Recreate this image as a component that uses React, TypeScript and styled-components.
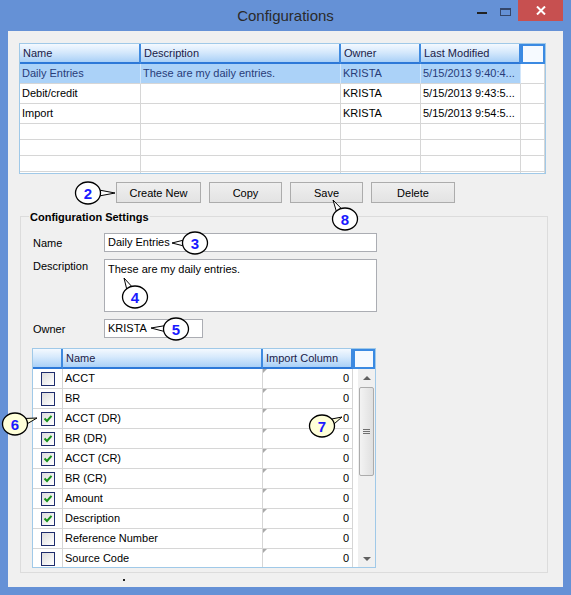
import React from 'react';
import styled, { createGlobalStyle } from 'styled-components';

const GlobalStyle = createGlobalStyle`
  html, body {
    margin: 0;
    padding: 0;
    background: #ffffff;
  }
  body {
    font-family: "Liberation Sans", Arial, sans-serif;
    font-size: 11px;
    color: #000;
  }
`;

const configs = [
  { name: 'Daily Entries', description: 'These are my daily entries.', owner: 'KRISTA', modified: '5/15/2013 9:40:4...' },
  { name: 'Debit/credit', description: '', owner: 'KRISTA', modified: '5/15/2013 9:43:5...' },
  { name: 'Import', description: '', owner: 'KRISTA', modified: '5/15/2013 9:54:5...' },
];

const fields = [
  { name: 'ACCT', checked: false },
  { name: 'BR', checked: false },
  { name: 'ACCT (DR)', checked: true },
  { name: 'BR (DR)', checked: true },
  { name: 'ACCT (CR)', checked: true },
  { name: 'BR (CR)', checked: true },
  { name: 'Amount', checked: true },
  { name: 'Description', checked: true },
  { name: 'Reference Number', checked: false },
  { name: 'Source Code', checked: false },
];

// callout bubbles laid over the screenshot
const callouts = [
  { n: '2', cx: 88, cy: 193, tip: [115, 193], fill: '#ffffff' },
  { n: '3', cx: 195, cy: 243, tip: [172, 243], fill: '#ffffff' },
  { n: '4', cx: 135, cy: 297, tip: [124, 278], fill: '#ffffff' },
  { n: '5', cx: 176, cy: 329, tip: [151, 328], fill: '#ffffff' },
  { n: '8', cx: 345, cy: 219, tip: [333, 200], fill: '#ffffff' },
  { n: '6', cx: 15, cy: 424, tip: [37, 418], fill: '#ffffd9' },
  { n: '7', cx: 322, cy: 426, tip: [342, 417], fill: '#ffffd9' },
];

const topCols = '121px 200px 80px 100px 24px';
const fieldCols = '30px 200px 90px';

const App = () => {
  return (
    <>
      <GlobalStyle />
      <Window>
        <TitleBar>
          <span />
          <Title>Configurations</Title>
          <Controls>
            <MinButton>
              <MinGlyph />
            </MinButton>
            <MaxButton>
              <MaxGlyph />
            </MaxButton>
            <CloseButton>
              <svg width="10" height="9" viewBox="0 0 10 9">
                <path d="M1 0.5 L9 8.5 M9 0.5 L1 8.5" stroke="#fff" strokeWidth="2" />
              </svg>
            </CloseButton>
          </Controls>
        </TitleBar>

        <Client>
          <TopGrid>
            <GridRow cols={topCols} height={20}>
              <HeaderCell>Name</HeaderCell>
              <HeaderCell>Description</HeaderCell>
              <HeaderCell>Owner</HeaderCell>
              <HeaderCell>Last Modified</HeaderCell>
              <HeaderCorner />
            </GridRow>
            {configs.map((c) => (
              <GridRow key={c.name} cols={topCols} height={20}>
                <Cell selected={c.name === 'Daily Entries'}>{c.name}</Cell>
                <Cell selected={c.name === 'Daily Entries'}>{c.description}</Cell>
                <Cell selected={c.name === 'Daily Entries'}>{c.owner}</Cell>
                <Cell selected={c.name === 'Daily Entries'}>{c.modified}</Cell>
                <Cell />
              </GridRow>
            ))}
            {[0, 1, 2, 3].map((i) => (
              <GridRow key={i} cols={topCols} height={16}>
                <Cell />
                <Cell />
                <Cell />
                <Cell />
                <Cell />
              </GridRow>
            ))}
          </TopGrid>

          <ButtonRow>
            <Button width={85}>Create New</Button>
            <Button width={73}>Copy</Button>
            <Button width={73}>Save</Button>
            <Button width={84}>Delete</Button>
          </ButtonRow>

          <GroupBox>
            <GroupTitle>Configuration Settings</GroupTitle>

            <FieldRow gap={9}>
              <Label>Name</Label>
              <TextBox width={273}>Daily Entries</TextBox>
            </FieldRow>
            <FieldRow gap={7} top>
              <Label>Description</Label>
              <TextArea>These are my daily entries.</TextArea>
            </FieldRow>
            <FieldRow gap={7}>
              <Label>Owner</Label>
              <TextBox width={99}>KRISTA</TextBox>
            </FieldRow>

            <FieldGrid>
              <GridRow cols={`${fieldCols} 1fr`} height={20}>
                <HeaderCell />
                <HeaderCell>Name</HeaderCell>
                <HeaderCell>Import Column</HeaderCell>
                <HeaderCorner />
              </GridRow>
              <FieldBody>
                <FieldRows>
                  {fields.map((f) => (
                    <GridRow key={f.name} cols={fieldCols} height={20}>
                      <CheckCell>
                        <CheckBox>
                          {f.checked && (
                            <svg width="10" height="9" viewBox="0 0 10 9">
                              <path d="M1.5 4.5 L4 7 L8.5 1.8" stroke="#17911b" strokeWidth="2" fill="none" />
                            </svg>
                          )}
                        </CheckBox>
                      </CheckCell>
                      <Cell>{f.name}</Cell>
                      <NumberCell>0</NumberCell>
                    </GridRow>
                  ))}
                </FieldRows>
                <Spacer />
                <ScrollBar>
                  <ScrollArrow>
                    <ArrowUp />
                  </ScrollArrow>
                  <Thumb>
                    <Grip />
                    <Grip />
                    <Grip />
                  </Thumb>
                  <Track />
                  <ScrollArrow>
                    <ArrowDown />
                  </ScrollArrow>
                </ScrollBar>
              </FieldBody>
            </FieldGrid>
          </GroupBox>

          <Footer>
            <Dot />
          </Footer>
        </Client>

        <Overlay width="571" height="595" viewBox="0 0 571 595">
          {callouts.map((c) => {
            const dx = c.tip[0] - c.cx;
            const dy = c.tip[1] - c.cy;
            const len = Math.hypot(dx, dy);
            const ux = dx / len;
            const uy = dy / len;
            const bx = c.cx + ux * 11;
            const by = c.cy + uy * 10;
            const px = -uy * 3;
            const py = ux * 3;
            return (
              <g key={c.n}>
                <polygon
                  points={`${bx + px},${by + py} ${c.tip[0]},${c.tip[1]} ${bx - px},${by - py}`}
                  fill={c.fill}
                  stroke="#000"
                  strokeWidth="1"
                />
                <ellipse cx={c.cx} cy={c.cy} rx="12.5" ry="11" fill={c.fill} stroke="#000" strokeWidth="1.3" />
                <CalloutNumber x={c.cx} y={c.cy + 5.5} textAnchor="middle">
                  {c.n}
                </CalloutNumber>
              </g>
            );
          })}
        </Overlay>
      </Window>
    </>
  );
};

export default App;

const Window = styled.div`
  position: relative;
  width: 571px;
  height: 595px;
  background: #6591d6;
  display: flex;
  flex-direction: column;
  overflow: hidden;
`;

const TitleBar = styled.div`
  height: 31px;
  flex-shrink: 0;
  display: grid;
  grid-template-columns: 1fr auto 1fr;
  align-items: start;
`;

const Title = styled.div`
  font-size: 15px;
  line-height: 31px;
  color: #2a2a2a;
`;

const Controls = styled.div`
  justify-self: end;
  display: flex;
  padding-right: 8px;
`;

const MinButton = styled.div`
  width: 21px;
  height: 21px;
  display: flex;
  justify-content: center;
`;

const MinGlyph = styled.div`
  width: 10px;
  height: 2px;
  margin-top: 12px;
  background: #222;
`;

const MaxButton = styled.div`
  width: 26px;
  height: 21px;
  display: flex;
  justify-content: center;
`;

const MaxGlyph = styled.div`
  width: 9px;
  height: 5px;
  margin-top: 8px;
  border: 1px solid #34466a;
  border-top-width: 2px;
`;

const CloseButton = styled.div`
  width: 45px;
  height: 21px;
  background: #c75050;
  display: flex;
  align-items: center;
  justify-content: center;
`;

const Client = styled.div`
  flex: 1;
  margin: 0 8px 8px 8px;
  padding: 12px 16px 0 11px;
  background: #f0f0f0;
  display: flex;
  flex-direction: column;
`;

const TopGrid = styled.div`
  width: 525px;
  height: 129px;
  border: 1px solid #a0c9e8;
  background: #fff;
  overflow: hidden;
`;

const GridRow = styled.div<{ cols: string; height: number }>`
  display: grid;
  grid-template-columns: ${({ cols }) => cols};
  height: ${({ height }) => height}px;
`;

const HeaderCell = styled.div`
  box-sizing: border-box;
  padding-left: 3px;
  line-height: 18px;
  color: #1b1b48;
  white-space: nowrap;
  overflow: hidden;
  background: linear-gradient(to bottom, #f4f9ff 0%, #d6e9fc 45%, #a9d0f7 100%);
  border-right: 2px solid #3f8ae0;
  border-bottom: 2px solid #2c78d8;
`;

const HeaderCorner = styled.div`
  box-sizing: border-box;
  background: #f6faff;
  border: 2px solid #3b8ae2;
`;

const Cell = styled.div<{ selected?: boolean }>`
  box-sizing: border-box;
  padding-left: 2px;
  line-height: 19px;
  white-space: nowrap;
  overflow: hidden;
  color: ${({ selected }) => (selected ? '#283c78' : '#000')};
  background: ${({ selected }) => (selected ? '#abd2f8' : '#fff')};
  border-right: 1px solid ${({ selected }) => (selected ? '#d2e6fa' : '#d6d6d6')};
  border-bottom: 1px solid #d6d6d6;
`;

const ButtonRow = styled.div`
  display: flex;
  gap: 8px;
  margin-top: 8px;
  padding-left: 97px;
`;

const Button = styled.div<{ width: number }>`
  box-sizing: border-box;
  width: ${({ width }) => width}px;
  height: 21px;
  border: 1px solid #acacac;
  background: linear-gradient(to bottom, #efefef, #e3e3e3);
  display: flex;
  align-items: center;
  justify-content: center;
  font-size: 11px;
`;

const GroupBox = styled.div`
  width: 515px;
  margin: 13px 0 0 1px;
  padding: 0 0 4px 11px;
  border: 1px solid #dcdcdc;
`;

const GroupTitle = styled.div`
  width: fit-content;
  height: 14px;
  margin: -7px 0 0 -3px;
  padding: 0 1px;
  background: #f0f0f0;
  font-weight: bold;
  line-height: 14px;
  font-size: 11px;
`;

const FieldRow = styled.div<{ gap: number; top?: boolean }>`
  display: flex;
  align-items: ${({ top }) => (top ? 'flex-start' : 'center')};
  margin-top: ${({ gap }) => gap}px;
`;

const Label = styled.div`
  width: 71px;
  padding-left: 1px;
  line-height: 14px;
`;

const TextBox = styled.div<{ width: number }>`
  box-sizing: border-box;
  width: ${({ width }) => width}px;
  height: 19px;
  padding-left: 3px;
  line-height: 17px;
  background: #fff;
  border: 1px solid #abadb3;
`;

const TextArea = styled.div`
  box-sizing: border-box;
  width: 273px;
  height: 53px;
  padding: 2px 0 0 3px;
  line-height: 14px;
  background: #fff;
  border: 1px solid #abadb3;
`;

const FieldGrid = styled.div`
  width: 342px;
  height: 218px;
  margin-top: 10px;
  border: 1px solid #a0c9e8;
  background: #fff;
  overflow: hidden;
`;

const FieldBody = styled.div`
  display: flex;
  height: 198px;
`;

const FieldRows = styled.div`
  width: 321px;
  overflow: hidden;
`;

const Spacer = styled.div`
  width: 4px;
`;

const CheckCell = styled.div`
  box-sizing: border-box;
  display: flex;
  align-items: center;
  justify-content: center;
  padding-left: 1px;
  border-right: 1px solid #d6d6d6;
  border-bottom: 1px solid #d6d6d6;
`;

const CheckBox = styled.div`
  box-sizing: border-box;
  width: 14px;
  height: 14px;
  border: 1px solid #1e2c6c;
  background: linear-gradient(135deg, #dcdcdc, #f6f6f6 70%, #ffffff);
  display: flex;
  align-items: center;
  justify-content: center;
`;

const NumberCell = styled.div`
  position: relative;
  box-sizing: border-box;
  padding-right: 3px;
  text-align: right;
  line-height: 19px;
  border-right: 1px solid #d6d6d6;
  border-bottom: 1px solid #d6d6d6;

  &::before {
    content: '';
    position: absolute;
    top: 0;
    left: 0;
    border-top: 4px solid #a9a9a9;
    border-right: 4px solid transparent;
  }
`;

const ScrollBar = styled.div`
  width: 17px;
  display: flex;
  flex-direction: column;
  background: #f0f0f0;
`;

const ScrollArrow = styled.div`
  height: 17px;
  display: flex;
  align-items: center;
  justify-content: center;
`;

const ArrowUp = styled.div`
  width: 0;
  height: 0;
  border-left: 4px solid transparent;
  border-right: 4px solid transparent;
  border-bottom: 4px solid #606060;
`;

const ArrowDown = styled.div`
  width: 0;
  height: 0;
  border-left: 4px solid transparent;
  border-right: 4px solid transparent;
  border-top: 4px solid #606060;
`;

const Thumb = styled.div`
  box-sizing: border-box;
  height: 89px;
  margin: 1px 1px 0 1px;
  border: 1px solid #acacac;
  border-radius: 2px;
  background: linear-gradient(to right, #f3f3f3, #e0e0e0);
  display: flex;
  flex-direction: column;
  align-items: center;
  justify-content: center;
  gap: 1px;
`;

const Grip = styled.div`
  width: 7px;
  height: 1px;
  background: #707070;
`;

const Track = styled.div`
  flex: 1;
`;

const Footer = styled.div`
  height: 12px;
  padding-left: 104px;
`;

const Dot = styled.div`
  width: 2px;
  height: 2px;
  margin-top: 6px;
  background: #222;
`;

const Overlay = styled.svg`
  position: absolute;
  top: 0;
  left: 0;
  pointer-events: none;
`;

const CalloutNumber = styled.text`
  font-family: "Liberation Sans", Arial, sans-serif;
  font-size: 15px;
  font-weight: bold;
  fill: #1a1aff;
`;
